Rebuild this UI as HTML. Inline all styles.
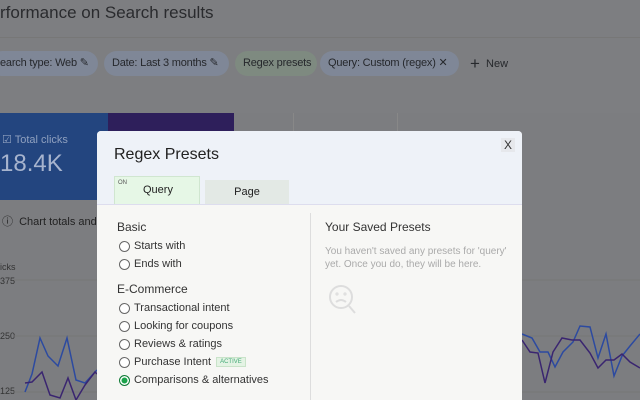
<html><head><style>
body{margin:0;width:640px;height:400px;overflow:hidden;background:#7d7e81;font-family:"Liberation Sans",sans-serif;position:relative}
.a{position:absolute}
.chip{position:absolute;top:51px;height:25px;border-radius:13px;background:#7f8797;color:#26282c;font-size:11px;line-height:25px;padding:0 8px;box-sizing:border-box;white-space:nowrap;overflow:hidden;letter-spacing:-0.2px}
.r{display:flex;align-items:center;font-size:11px;color:#333;height:18px;white-space:nowrap}
.r i{width:9px;height:9px;border:1px solid #666;border-radius:50%;margin-right:4px;display:inline-block;background:#fff}
</style></head><body>
<div class="a" style="left:0;top:3px;font-size:17px;color:#2a2b2e;white-space:nowrap">rformance on Search results</div>
<div class="a" style="left:0;top:37px;width:640px;height:1px;background:#777"></div>
<div class="chip" style="left:-10px;width:108px;padding-left:10px">earch type: Web ✎</div>
<div class="chip" style="left:104px;width:125px">Date: Last 3 months ✎</div>
<div class="chip" style="left:235px;width:82px;background:#7e8a80">Regex presets</div>
<div class="chip" style="left:320px;width:139px">Query: Custom (regex) ✕</div>
<div class="a" style="left:470px;top:54px;font-size:11px;color:#26282c;white-space:nowrap"><span style="font-size:17px;vertical-align:-2px">+</span>&nbsp; New</div>
<div class="a" style="left:0;top:113px;width:640px;height:287px;background:#7c7d80"></div>
<div class="a" style="left:0;top:113px;width:108px;height:87px;background:#23457f"></div>
<div class="a" style="left:108px;top:113px;width:126px;height:87px;background:#2e1f5b"></div>
<div class="a" style="left:293px;top:113px;width:1px;height:20px;background:#888"></div>
<div class="a" style="left:397px;top:113px;width:1px;height:20px;background:#888"></div>
<div class="a" style="left:2px;top:133px;font-size:11px;color:#8fa0bf;white-space:nowrap">☑ Total clicks</div>
<div class="a" style="left:0;top:150px;font-size:24px;color:#a7b4ce">18.4K</div>
<div class="a" style="left:2px;top:213px;font-size:11px;color:#222;white-space:nowrap">ⓘ&nbsp; Chart totals and ta</div>
<div class="a" style="left:0;top:262px;font-size:9px;color:#333">icks</div>
<div class="a" style="left:0;top:276px;font-size:9px;color:#333">375</div>
<div class="a" style="left:0;top:331px;font-size:9px;color:#333">250</div>
<div class="a" style="left:0;top:386px;font-size:9px;color:#333">125</div>
<svg class="a" style="left:0;top:0" width="640" height="400"><g fill="none" stroke-width="1.5">
<line x1="14" y1="280" x2="640" y2="280" stroke="#767676" stroke-width="1"/><line x1="14" y1="336" x2="640" y2="336" stroke="#767676" stroke-width="1"/><line x1="14" y1="392" x2="640" y2="392" stroke="#767676" stroke-width="1"/>
<polyline stroke="#2c4aa0" points="25,392 32,374 40,338 48,356 58,366 67,338 76,380 85,383 95,372 97,370"/>
<polyline stroke="#3a2570" points="25,383 32,382 42,372 50,395 60,398 68,378 76,400 85,385 95,372 97,374"/>
<polyline stroke="#2c4aa0" points="522,334 532,338 540,352 548,352 555,367 563,352 573,342 580,326 590,327 598,358 606,334 614,376 622,356 630,346 640,334"/>
<polyline stroke="#3a2570" points="522,340 530,352 538,353 545,383 553,352 562,338 572,340 580,340 590,353 598,368 606,360 614,360 622,354 630,362 640,368"/>
</g></svg>
<div class="a" style="left:97px;top:131px;width:425px;height:269px;background:#f7f7f5;border-radius:4px 4px 0 0;overflow:hidden">
<div class="a" style="left:0;top:0;width:425px;height:73px;background:#eef2f8;border-bottom:1px solid #dde"></div>
<div class="a" style="left:17px;top:15px;font-size:16px;color:#222">Regex Presets</div>
<div class="a" style="left:404px;top:7px;font-size:12px;color:#333;background:#e6e8ec;padding:0 3px">X</div>
<div class="a" style="left:17px;top:45px;width:84px;height:27px;background:#e6f7e6;border:1px solid #d0e6d0;border-bottom:none"></div>
<div class="a" style="left:21px;top:49px;font-size:6px;color:#555">ON</div>
<div class="a" style="left:46px;top:53px;font-size:11px;color:#222">Query</div>
<div class="a" style="left:108px;top:49px;width:84px;height:24px;background:#e3e9e5;text-align:center;font-size:11px;line-height:24px;color:#222">Page</div>
<div class="a" style="left:213px;top:82px;width:1px;height:187px;background:#ddd"></div>
<div class="a" style="left:20px;top:89px;font-size:12px;color:#333">Basic</div>
<div class="a" style="left:22px;top:106px"><div class="r"><i></i>Starts with</div><div class="r"><i></i>Ends with</div></div>
<div class="a" style="left:20px;top:151px;font-size:12px;color:#333">E-Commerce</div>
<div class="a" style="left:22px;top:168px"><div class="r"><i></i>Transactional intent</div><div class="r"><i></i>Looking for coupons</div><div class="r"><i></i>Reviews &amp; ratings</div><div class="r"><i></i>Purchase Intent <span style="font-size:6px;background:#e4f3e4;border:1px solid #c9e3c9;padding:1px 3px;margin-left:5px;color:#4a7">ACTIVE</span></div><div class="r"><i style="background:#1aa34a;border-color:#107a36;box-shadow:inset 0 0 0 1.5px #fff"></i>Comparisons &amp; alternatives</div></div>
<div class="a" style="left:228px;top:89px;font-size:12px;color:#333">Your Saved Presets</div>
<div class="a" style="left:228px;top:114px;width:185px;font-size:10px;line-height:13px;color:#aaa">You haven't saved any presets for 'query' yet. Once you do, they will be here.</div>
<svg class="a" style="left:230px;top:151px" width="32" height="36"><g fill="none" stroke="#ddd" stroke-width="2"><circle cx="14" cy="15" r="11"/><line x1="22" y1="24" x2="28" y2="31"/><circle cx="10" cy="12" r=".6"/><circle cx="18" cy="12" r=".6"/><path d="M9 20q5-4 10 0"/></g></svg>
</div>
</body></html>
